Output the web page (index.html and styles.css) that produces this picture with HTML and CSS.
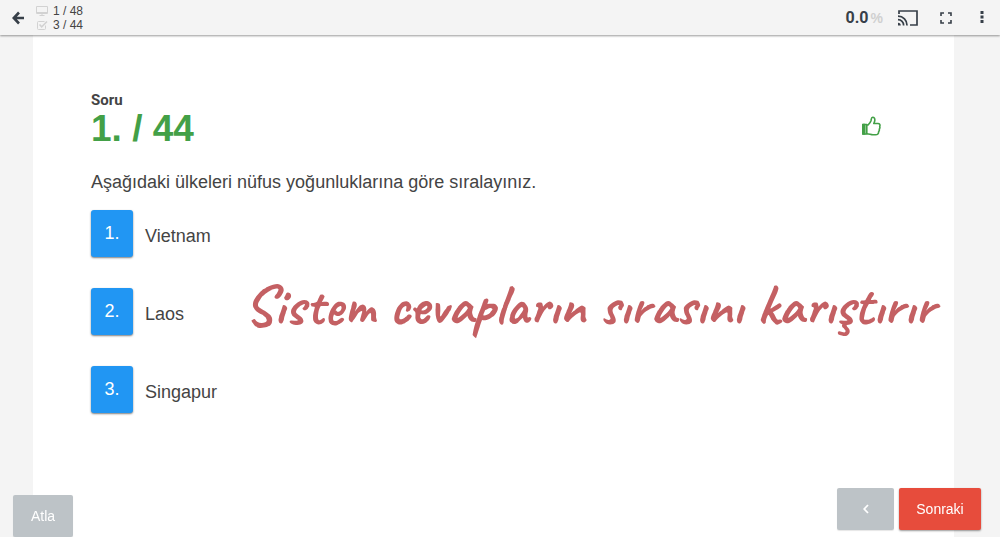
FILE: index.html
```
<!DOCTYPE html>
<html lang="tr">
<head>
  <meta charset="UTF-8" />
  <title>Soru 1 / 44</title>
  <meta name="viewport" content="width=device-width, initial-scale=1.0" />
  <link rel="stylesheet" href="styles.css">
</head>
<body>
  <header class="topbar">
    <button class="icon-btn" aria-label="Geri">
      <svg width="12" height="14" viewBox="0 0 12 14" fill="none" stroke="#373f48" stroke-width="2.6"><path d="M7 1.5 1.8 7 7 12.5M2 7h10" /></svg>
    </button>
    <div class="counters">
      <div class="counter">
        <svg width="12" height="12" viewBox="0 0 12 12" fill="none" stroke="#d2d2d2"><path d="M.5 1.500h11v7H.5zM1 7.500h10M6 8.500v2M3.500 10.500h5" /></svg>
        <span>1 / 48</span>
      </div>
      <div class="counter">
        <svg width="12" height="12" viewBox="0 0 12 12" fill="none" stroke="#d2d2d2"><path d="M9.5 6.5v3q0 1-1 1h-6q-1 0-1-1v-6q0-1 1-1h6" /><path d="M3.5 5.5 5.7 7.8 11 2.5" stroke-width="1.6" /></svg>
        <span>3 / 44</span>
      </div>
    </div>
    <div class="tools">
      <div class="score">0.0<span class="percent">%</span></div>
      <button class="icon-btn" aria-label="Yayınla">
        <svg width="20" height="16" viewBox="0 0 20 16" fill="none" stroke="#373f48" stroke-width="1.7"><path d="M1 4V1h18v14h-7" /><path d="M0 6.2A9 9 0 0 1 9 15.5M0 9.6a5.6 5.6 0 0 1 5.6 5.9" /><path d="M0 12.8a2.8 2.8 0 0 1 2.8 2.7H0z" fill="#373f48" stroke="none" /></svg>
      </button>
      <button class="icon-btn" aria-label="Tam ekran">
        <svg width="12" height="12" viewBox="0 0 12 12" fill="none" stroke="#373f48" stroke-width="1.6"><path d="M1 4V1h3M8 1h3v3M11 8v3H8M4 11H1V8" /></svg>
      </button>
      <button class="icon-btn menu" aria-label="Menü">
        <svg width="4" height="12" viewBox="0 0 4 12" fill="#373f48"><path d="M.5 0h3v3h-3zM.5 4.5h3v3h-3zM.5 9h3v3h-3z" /></svg>
      </button>
    </div>
  </header>

  <main class="page">
    <div class="question-head">
      <div>
        <div class="label">Soru</div>
        <h1>1. / 44</h1>
      </div>
      <button class="icon-btn like" aria-label="Beğen">
        <svg width="20" height="20" viewBox="0 0 20 20" fill="none" stroke="#43a047" stroke-width="1.6" stroke-linejoin="round"><path d="M1.8 8.5h4V18h-4z" /><path d="M1.8 8.5h2V18h-2z" fill="#43a047" /><path d="M5.8 9H7c1.2-1.3 2.5-2.7 3-4.3.4-1.6.2-3.5 1.6-3.500 1.700 0 2.400 1.500 2.200 3.200-.1 1.300-.6 2.100-1 3.100H17c1.700 0 2.400 1.500 1.700 3 .4 1 .2 1.900-.4 2.700.2 1-.1 1.900-.7 2.500.1 2-1 3.100-3 3.100H12c-2.200 0-3.700-1-6.200-1" /></svg>
      </button>
    </div>
    <p class="question">Aşağıdaki ülkeleri nüfus yoğunluklarına göre sıralayınız.</p>
    <ul class="options">
      <li><button class="number">1.</button><span>Vietnam</span></li>
      <li><button class="number">2.</button><span>Laos</span></li>
      <li><button class="number">3.</button><span>Singapur</span></li>
    </ul>
    <div class="note">Sistem cevapların sırasını karıştırır</div>
  </main>

  <footer class="actions">
    <button class="btn skip">Atla</button>
    <div class="nav">
      <button class="btn prev" aria-label="Önceki">
        <svg width="6" height="10" viewBox="0 0 6 10" fill="none" stroke="#fff" stroke-width="1.8"><path d="M5 1 1.2 5 5 9" /></svg>
      </button>
      <button class="btn next">Sonraki</button>
    </div>
  </footer>
</body>
</html>
```
FILE: styles.css
```
* {
  box-sizing: border-box;
}

body {
  margin: 0;
  min-height: 100vh;
  display: flex;
  flex-direction: column;
  background-color: #f4f4f4;
  color: #444;
  font-family: "Liberation Sans", Arial, sans-serif;
}

button {
  font-family: inherit;
  border: none;
  cursor: pointer;
}

svg {
  display: block;
}

/* Top bar */
.topbar {
  position: relative;
  z-index: 1;
  display: flex;
  align-items: center;
  height: 35px;
  padding: 0 16px 0 12px;
  background-color: #f4f4f4;
  box-shadow: 0 1px 2px rgba(0, 0, 0, 0.4);
}

.icon-btn {
  padding: 0;
  background-color: transparent;
}

.counters {
  margin-left: 12px;
  font-size: 12px;
  line-height: 14px;
}

.counter {
  display: flex;
  align-items: center;
  gap: 5px;
}

.tools {
  display: flex;
  align-items: center;
  margin-left: auto;
}

.tools .icon-btn {
  margin-left: 22px;
}

.tools .score + .icon-btn {
  margin-left: 15px;
}

.tools .menu {
  margin: 0 0 2px 28px;
}

.score {
  font: bold 16px Roboto, sans-serif;
  color: #373f48;
}

.percent {
  margin-left: 2px;
  font-size: 14px;
  font-family: "Liberation Sans", Arial, sans-serif;
  color: #d0d0d0;
}

/* Question */
.page {
  position: relative;
  flex: 1;
  margin: 0 46px 0 33px;
  padding: 56px 58px 100px;
  background-color: #fff;
}

.question-head {
  display: flex;
  justify-content: space-between;
  align-items: center;
}

.label {
  font: bold 15px/18px Roboto, sans-serif;
}

h1 {
  margin: 0;
  font-size: 37px;
  line-height: 40px;
  color: #43a047;
}

.like {
  margin: 11px 15px 0 0;
}

.question {
  margin: 21px 0 16px;
  font-size: 18px;
  line-height: 24px;
}

.options {
  display: flex;
  flex-direction: column;
  gap: 31px;
  margin: 0;
  padding: 0;
  list-style: none;
}

.options li {
  display: flex;
  align-items: center;
  gap: 12px;
  font-size: 18px;
  line-height: 24px;
}

.options span {
  padding-top: 5px;
}

.number {
  width: 42px;
  height: 47px;
  font-size: 18px;
  color: #fff;
  background-color: #2196f3;
  border-radius: 3px;
  box-shadow: 0 1px 2px rgba(0, 0, 0, 0.5);
}

/* Handwritten note over the answers */
.note {
  position: absolute;
  top: 238px;
  right: 19px;
  font: bold 57px/64px Caveat, cursive;
  color: #c46063;
  white-space: nowrap;
}

/* Bottom buttons */
.actions {
  position: fixed;
  left: 13px;
  right: 19px;
  bottom: 0;
  display: flex;
  justify-content: space-between;
  align-items: flex-end;
}

.nav {
  display: flex;
  gap: 5px;
  margin-bottom: 7px;
}

.btn {
  display: flex;
  align-items: center;
  justify-content: center;
  height: 42px;
  font-size: 14px;
  color: #fff;
  background-color: #bdc3c7;
  border-radius: 2px;
  box-shadow: 0 1px 1px rgba(0, 0, 0, 0.1);
}

.skip {
  width: 60px;
}

.prev {
  width: 57px;
}

.next {
  width: 82px;
  background-color: #e74c3c;
  box-shadow: 0 1px 2px rgba(0, 0, 0, 0.4);
}
```
